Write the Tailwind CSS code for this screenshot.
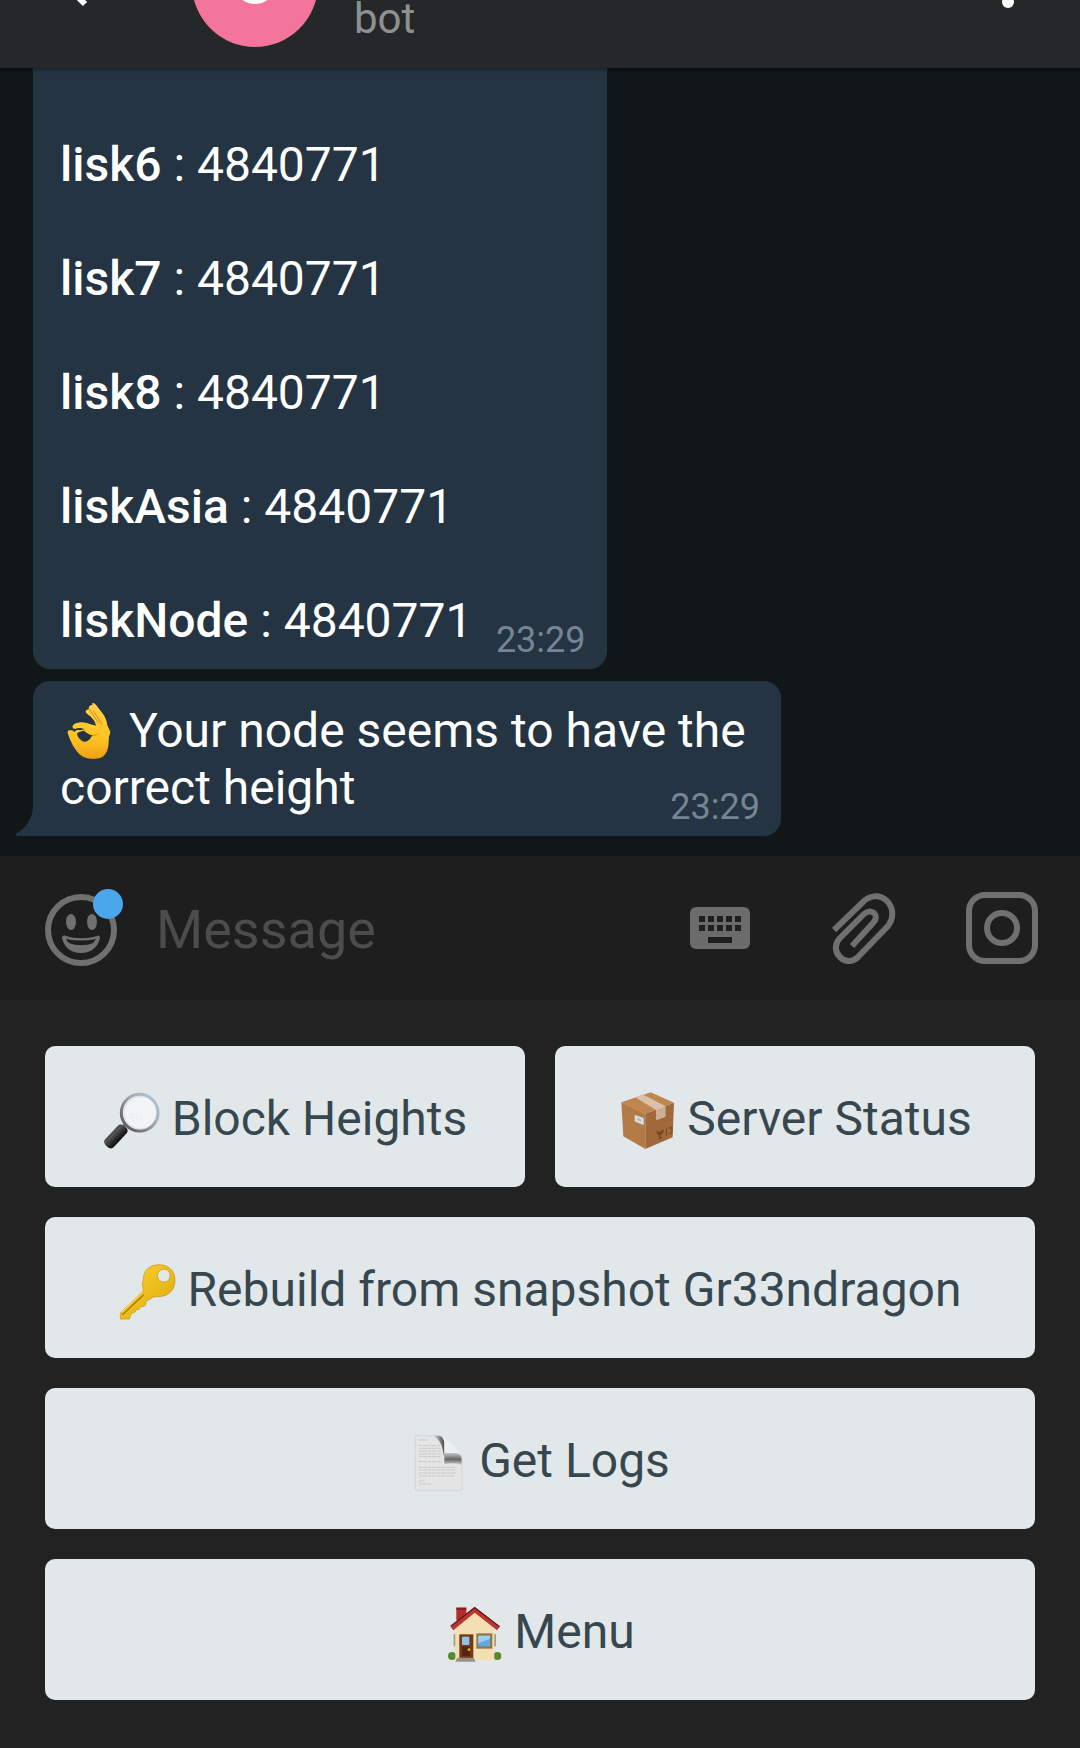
<!DOCTYPE html>
<html lang="en">
<head>
<meta charset="utf-8">
<meta name="viewport" content="width=device-width, initial-scale=1">
<title>Lisk bot chat</title>
<script src="https://cdn.jsdelivr.net/npm/@tailwindcss/browser@4"></script>
</head>
<body class="flex min-h-screen flex-col bg-[#111616] font-['Roboto',sans-serif] text-5xl leading-[57px] text-white">

<header class="z-10 flex h-[68px] items-end overflow-hidden bg-[#242828] shadow-[0_2px_3px_rgba(0,0,0,0.35)]">
  <button type="button" aria-label="Back" class="ml-11 mb-[61px] shrink-0">
    <svg class="block h-12 w-12" viewBox="0 0 48 48" fill="none" stroke="#fff" stroke-width="6"><path d="M41 45 20 24 41 3M22 24h26"/></svg>
  </button>
  <div class="mb-[21px] ml-[100px] size-[126px] shrink-0 rounded-full bg-[#f4759b]">
    <svg class="block h-full w-full" viewBox="0 0 126 126" fill="none" stroke="#fff" stroke-width="6"><circle cx="63" cy="62" r="18"/></svg>
  </div>
  <p class="ml-9 mb-6 flex-1 text-[42px] leading-[50px] text-[#8f9090]">bot</p>
  <button type="button" aria-label="More options" class="mr-[66px] mb-[60px] shrink-0">
    <svg class="block h-12 w-3" viewBox="0 0 12 48" fill="#fff"><circle cx="6" cy="6" r="6"/><circle cx="6" cy="24" r="6"/><circle cx="6" cy="42" r="6"/></svg>
  </button>
</header>

<main class="flex flex-1 flex-col items-start justify-end gap-3 px-[33px] pb-5">
  <article class="flex flex-col rounded-b-[17px] bg-[#243442] pr-[21px] pb-[11px] pl-[27px] pt-[68px]">
    <div class="flex flex-col gap-[57px] pr-[113px]">
      <p><b class="font-medium">lisk6</b> : 4840771</p>
      <p><b class="font-medium">lisk7</b> : 4840771</p>
      <p><b class="font-medium">lisk8</b> : 4840771</p>
      <p><b class="font-medium">liskAsia</b> : 4840771</p>
      <p><b class="font-medium">liskNode</b> : 4840771</p>
    </div>
    <time class="-mt-[27px] self-end text-4xl leading-9 text-[#758594]">23:29</time>
  </article>

  <article class="relative flex max-w-[748px] flex-col rounded-[17px] rounded-bl-none bg-[#243442] pt-[21px] pr-[21px] pb-[11px] pl-[27px]">
    <svg class="absolute bottom-0 -left-[17px] h-[30px] w-[18px]" viewBox="0 0 18 30" fill="#243442"><path d="M18 0h-1C17 12 10 22 1 27c-2 1-1 3 1 3h16z"/></svg>
    <p><svg class="inline-block size-[57px] align-top" viewBox="180 126 171 171" role="img" aria-label="OK hand"><defs><linearGradient id="hand" x1="0" y1="0" x2="0" y2="1"><stop offset="0" stop-color="#ffd24a"/><stop offset=".65" stop-color="#fcc221"/><stop offset="1" stop-color="#ee9f15"/></linearGradient></defs><path fill="url(#hand)" fill-rule="evenodd" d="M277 129c5-1 9 2 12 7l20 26c7 10 12 22 13 34l8 17c1 6 0 11-3 16l-2 28c-2 14-8 28-20 35-14 7-36 6-52 0-18-7-31-28-39-45-5-11-9-22-11-29-1-6 4-8 9-7 6-1 9 3 12 5 4-8 11-5 18-6l13-2c-8-3-18-6-28-2-6 2-11-3-9-8 3-8 19-11 29-11 14 0 24 8 34 8l7 2c-2-12-10-21-17-28-6-5-13-9-14-13-1-5 5-8 8-7l1-3c0-7 4-11 11-11zM233 218c-3 2-2 8 1 12 6 9 14 16 23 15 9-2 16-11 20-20-10 0-18-8-25-13-5 1-13 3-19 6z"/><path fill="none" stroke="#d98b10" stroke-width="3" stroke-linecap="round" d="m268 148 27 40m-14-34 24 38m-28 33c5 2 11 1 15-3"/></svg> Your node seems to have the correct height</p>
    <time class="-mt-[27px] self-end text-4xl leading-9 text-[#758594]">23:29</time>
  </article>
</main>

<form class="flex h-36 items-center bg-[#1e1e1e] pr-[42px] pl-[45px]">
  <button type="button" aria-label="Emoji" class="relative mt-1 shrink-0">
    <svg class="block size-[72px]" viewBox="0 0 72 72" fill="none" stroke="#707070"><circle cx="36" cy="36" r="33" stroke-width="6"/><g fill="#707070" stroke="none"><ellipse cx="26" cy="28" rx="5" ry="8"/><ellipse cx="47" cy="28" rx="5" ry="8"/><path fill-rule="evenodd" d="M21 42c10 3 21 3 31 0 2-1 3 0 3 2-2 9-9 15-19 15s-17-6-19-15c0-2 1-3 4-2zm0 3c1 2 2 3 3 4 8 3 17 3 24 0l3-4c-10 2-20 2-30 0z"/></g></svg>
    <span class="absolute -top-[5px] -right-[6px] size-[30px] rounded-full bg-[#4ca6ea]"></span>
  </button>
  <input type="text" aria-label="Message" placeholder="Message" class="ml-[39px] mt-1 min-w-0 flex-1 bg-transparent text-[54px] leading-[64px] outline-none placeholder:text-[#4c4c4c] placeholder:opacity-100">
  <div class="flex shrink-0 items-center">
    <button type="button" aria-label="Bot keyboard" class="mr-[82px]">
      <svg class="block h-[42px] w-[60px]" viewBox="0 0 60 42"><rect width="60" height="42" rx="6" fill="#6b6b6b"/><path fill="#1e1e1e" d="M9 9h6v6H9zm9 0h6v6h-6zm9 0h6v6h-6zm9 0h6v6h-6zm9 0h6v6h-6zM9 18h6v6H9zm9 0h6v6h-6zm9 0h6v6h-6zm9 0h6v6h-6zm9 0h6v6h-6zM18 30h24v6H18z"/></svg>
    </button>
    <button type="button" aria-label="Attach file" class="mr-[70px]">
      <svg class="block h-[72px] w-16" viewBox="0 0 64 72" fill="none" stroke="#707070" stroke-width="6"><path d="M2 38 30 11C37 3 48 2 55 9c7 7 7 18 0 26L27 64c-5 6-14 7-19 1-6-6-5-14 0-19l24-24c3-3 7-3 10-1 3 3 2 7-1 10L20 54"/></svg>
    </button>
    <button type="button" aria-label="Camera">
      <svg class="block size-[72px]" viewBox="0 0 72 72" fill="none" stroke="#707070" stroke-width="6"><rect x="3" y="3" width="66" height="66" rx="16"/><circle cx="36" cy="36" r="15"/></svg>
    </button>
  </div>
</form>

<section aria-label="Bot commands" class="grid grid-cols-2 gap-[30px] bg-[#222] px-[45px] pt-[46px] pb-12 text-[#36474f]">
  <button type="button" class="flex h-[141px] items-center justify-center gap-3 rounded-[10px] bg-[#e2e7ea]">
    <svg class="h-[66px] w-[57px] shrink-0" viewBox="39 41 171 198"><defs><linearGradient id="rim" x1="1" y1="0" x2="0" y2="1"><stop offset="0" stop-color="#a8cdec"/><stop offset=".45" stop-color="#a4a6a8"/><stop offset="1" stop-color="#4c4c4c"/></linearGradient><linearGradient id="grip" x1="0" y1="0" x2="1" y2="1"><stop offset="0" stop-color="#111"/><stop offset=".4" stop-color="#555"/><stop offset=".6" stop-color="#1b1b1b"/><stop offset="1" stop-color="#000"/></linearGradient></defs><path stroke="#888" stroke-width="9" d="m96 172 14-15"/><circle cx="149" cy="127" r="55" fill="#f2f4f5" stroke="url(#rim)" stroke-width="9"/><circle cx="151" cy="127" r="49" fill="none" stroke="#cfd2d4" stroke-width="2"/><path fill="url(#grip)" d="M83 167c7-7 16-5 23 2 8 7 9 14 4 20l-39 42c-5 5-14 4-21-3-7-6-10-14-6-20z"/><path d="M115 133h40M122 141h38M130 149h32" stroke="#ccc" stroke-width="2" stroke-dasharray="2 6"/></svg>
    <span class="pt-1">Block Heights</span>
  </button>
  <button type="button" class="flex h-[141px] items-center justify-center gap-3 rounded-[10px] bg-[#e2e7ea]">
    <svg class="h-[66px] w-[57px] shrink-0" viewBox="54 41 171 198"><path fill="#c08650" d="m64 96 88-30 70 31-86 33z"/><path fill="#b47a46" d="m64 96 72 34v106l-66-38z"/><path fill="#a1693a" d="m136 130 86-33-4 104-82 35z"/><path fill="#dcc0a9" d="m106 81 24-8 66 34v32l-27 10v-29z"/><path fill="#ccaf97" d="m169 120 27-13v32l-27 10z"/><path fill="#d7dde0" d="m104 133 27 10v22l-27-12z"/><path fill="#a3bfc8" d="m112 142 11 5v7l-11-5z"/><path fill="#754824" d="m170 181 8 5 13-11c1 10-3 16-9 20v5l6 2-11 5v-11c-5-3-8-8-7-15zm28-6 3-1v21l-3 2zm9-4h3l7-3v20l-10 4v-3l7-3v-13l-7 3z"/></svg>
    <span class="pt-1">Server Status</span>
  </button>
  <button type="button" class="col-span-2 flex h-[141px] items-center justify-center gap-3 rounded-[10px] bg-[#e2e7ea]">
    <svg class="h-[66px] w-[57px] shrink-0" viewBox="57 43 171 198"><defs><linearGradient id="key" x1="0" y1="0" x2="1" y2="1"><stop offset="0" stop-color="#fbd62f"/><stop offset="1" stop-color="#dfa50c"/></linearGradient></defs><path fill="url(#key)" stroke="#ca930c" stroke-width="2" fill-rule="evenodd" d="M130 114c0-25 20-42 47-42 29 0 48 19 48 47 0 30-21 49-50 49-8 0-14-1-20 4l-18 12c2 10-4 15-16 14-1 8-6 11-13 8 0 8-6 12-13 11l-7 18H61v-18l67-65c5-6-2-13-1-21 0-6 3-10 3-17zm62-28c-11 0-19 8-19 19s8 19 19 19 18-8 18-19-7-19-18-19z"/><path stroke="#a87808" stroke-width="4" d="m67 222 64-60"/><path fill="none" stroke="#ffe261" stroke-width="3" d="m66 214 62-60"/></svg>
    <span class="pt-1">Rebuild from snapshot Gr33ndragon</span>
  </button>
  <button type="button" class="col-span-2 flex h-[141px] items-center justify-center gap-3 rounded-[10px] bg-[#e2e7ea]">
    <svg class="h-[66px] w-[57px] shrink-0" viewBox="60 31 171 198"><defs><linearGradient id="fold" x1="0" y1="0" x2="1" y2="0"><stop offset="0" stop-color="#e2e2e2"/><stop offset="1" stop-color="#4d4d4d"/></linearGradient><linearGradient id="curl" x1="0" y1="0" x2="0" y2="1"><stop offset="0" stop-color="#c8c8c8"/><stop offset=".5" stop-color="#666"/><stop offset="1" stop-color="#dedede"/></linearGradient></defs><path fill="#e5e5e5" stroke="#cfcfcf" stroke-width="2" d="M76 60h70c10 0 16 8 17 20v33h33c13 0 20 8 20 20v91H76z"/><path fill="url(#fold)" d="M128 60h18c10 0 16 8 17 20v42c-5-14-4-48-35-62z"/><path fill="url(#curl)" d="M163 112h32c13 0 20 8 20 20v18c-12-9-35-8-52-4z"/><path fill="#edf0f1" d="M149 60c8 2 13 9 14 20v32h32c9 0 16 3 20 10-5-18-49-60-66-62z"/><path stroke="#bbb" stroke-width="2" stroke-dasharray="9 2 15 2" d="M86 73h24M86 90h63M86 98h69M86 106h65M86 115h70M86 123h65M86 138h70M86 155h110M86 163h108M86 172h112M86 181h106M86 196h18M86 205h38"/></svg>
    <span class="pt-1">Get Logs</span>
  </button>
  <button type="button" class="col-span-2 flex h-[141px] items-center justify-center gap-3 rounded-[10px] bg-[#e2e7ea]">
    <svg class="h-[66px] w-[57px] shrink-0" viewBox="45 34 171 198"><g fill="#578a2d"><circle cx="66" cy="211" r="12"/><circle cx="202" cy="211" r="12"/></g><path fill="#a9977a" d="M71 145h6v37h-6zm121 0h6v37h-6z"/><path fill="#b52d2a" d="M79 66h30v38H79z"/><path fill="#8d201f" d="M79 66h30v7H79z"/><path fill="#f4dfb2" d="m76 130 59-54 58 54v94H76z"/><path fill="#bd3430" d="m134 65 75 58-8 11-67-53-64 53-8-11z"/><path fill="none" stroke="#5d1c1b" stroke-width="4" d="m62 122 72-56 75 57"/><path fill="#743719" d="M88 146h42v72H88z"/><path fill="#56250f" d="M96 183h24v28H96z"/><path fill="#8fc1e8" d="M96 153h22v25H96z"/><circle cx="117" cy="192" r="4" fill="#e9b33d"/><path fill="#92764f" d="M139 143h48v46h-48z"/><path fill="#62a9df" d="M145 150h35v32h-35z"/><path fill="#a3cdec" d="M145 150h35v9l-35 14z"/><path fill="#9b9089" d="M82 216h49l6 12H76z"/></svg>
    <span class="pt-1">Menu</span>
  </button>
</section>
</body>
</html>
